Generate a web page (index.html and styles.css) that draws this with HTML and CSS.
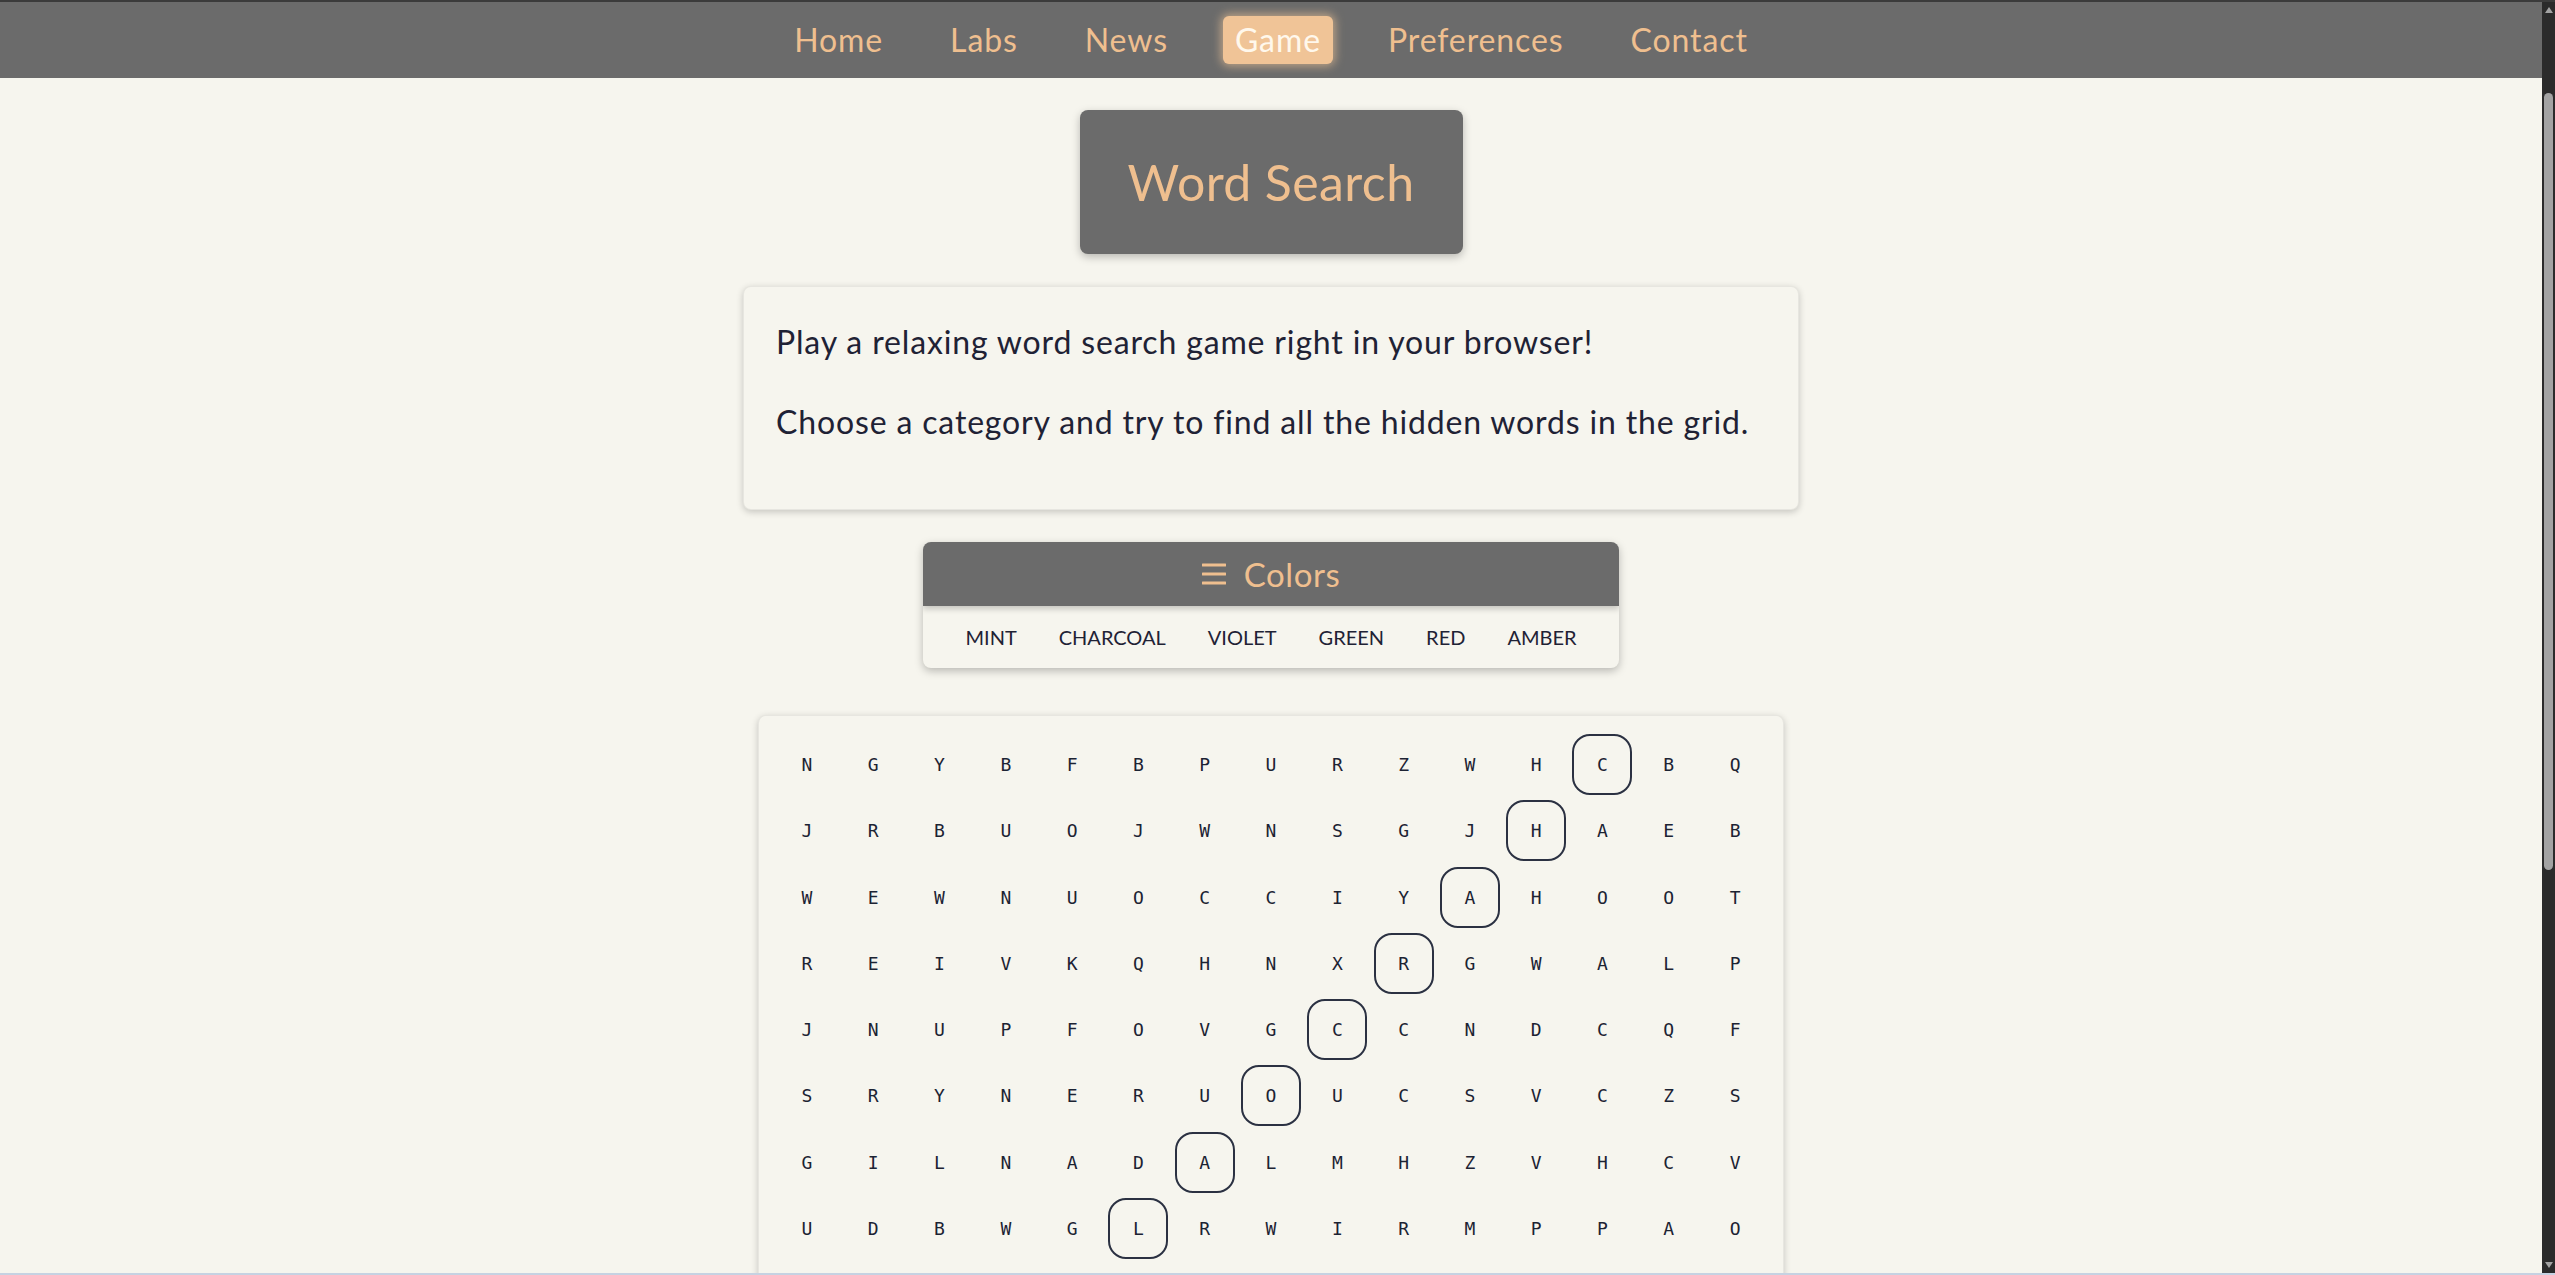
FILE: index.html
```html
<!DOCTYPE html>
<html lang="en">
<head>
<meta charset="utf-8">
<title>Word Search</title>
<link rel="stylesheet" href="styles.css">
</head>
<body>
<div class="frame">
  <div class="viewport">
    <header class="topbar">
      <nav class="nav">
        <a href="#">Home</a>
        <a href="#">Labs</a>
        <a href="#">News</a>
        <a href="#" class="active">Game</a>
        <a href="#">Preferences</a>
        <a href="#">Contact</a>
      </nav>
    </header>
    <main class="content">
      <h1 class="title">Word Search</h1>
      <section class="card intro">
        <p>Play a relaxing word search game right in your browser!</p>
        <p>Choose a category and try to find all the hidden words in the grid.</p>
      </section>
      <section class="category">
        <div class="category-head">
          <svg class="menu-icon" width="24" height="24" viewBox="0 0 24 24" aria-hidden="true">
            <rect x="0" y="1.5" width="24" height="3" rx="0.5"/>
            <rect x="0" y="10.5" width="24" height="3" rx="0.5"/>
            <rect x="0" y="19.5" width="24" height="3" rx="0.5"/>
          </svg>
          <span>Colors</span>
        </div>
        <ul class="word-list">
          <li>MINT</li>
          <li>CHARCOAL</li>
          <li>VIOLET</li>
          <li>GREEN</li>
          <li>RED</li>
          <li>AMBER</li>
        </ul>
      </section>
      <section class="card board">
        <div class="grid">
          <span>N</span><span>G</span><span>Y</span><span>B</span><span>F</span><span>B</span><span>P</span><span>U</span><span>R</span><span>Z</span><span>W</span><span>H</span><span class="found">C</span><span>B</span><span>Q</span>
          <span>J</span><span>R</span><span>B</span><span>U</span><span>O</span><span>J</span><span>W</span><span>N</span><span>S</span><span>G</span><span>J</span><span class="found">H</span><span>A</span><span>E</span><span>B</span>
          <span>W</span><span>E</span><span>W</span><span>N</span><span>U</span><span>O</span><span>C</span><span>C</span><span>I</span><span>Y</span><span class="found">A</span><span>H</span><span>O</span><span>O</span><span>T</span>
          <span>R</span><span>E</span><span>I</span><span>V</span><span>K</span><span>Q</span><span>H</span><span>N</span><span>X</span><span class="found">R</span><span>G</span><span>W</span><span>A</span><span>L</span><span>P</span>
          <span>J</span><span>N</span><span>U</span><span>P</span><span>F</span><span>O</span><span>V</span><span>G</span><span class="found">C</span><span>C</span><span>N</span><span>D</span><span>C</span><span>Q</span><span>F</span>
          <span>S</span><span>R</span><span>Y</span><span>N</span><span>E</span><span>R</span><span>U</span><span class="found">O</span><span>U</span><span>C</span><span>S</span><span>V</span><span>C</span><span>Z</span><span>S</span>
          <span>G</span><span>I</span><span>L</span><span>N</span><span>A</span><span>D</span><span class="found">A</span><span>L</span><span>M</span><span>H</span><span>Z</span><span>V</span><span>H</span><span>C</span><span>V</span>
          <span>U</span><span>D</span><span>B</span><span>W</span><span>G</span><span class="found">L</span><span>R</span><span>W</span><span>I</span><span>R</span><span>M</span><span>P</span><span>P</span><span>A</span><span>O</span>
          <span>K</span><span>T</span><span>E</span><span>S</span><span>M</span><span>A</span><span>O</span><span>B</span><span>N</span><span>D</span><span>F</span><span>H</span><span>J</span><span>V</span><span>L</span>
          <span>Y</span><span>P</span><span>Q</span><span>X</span><span>R</span><span>I</span><span>C</span><span>U</span><span>E</span><span>G</span><span>O</span><span>S</span><span>N</span><span>M</span><span>T</span>
          <span>H</span><span>A</span><span>W</span><span>F</span><span>L</span><span>D</span><span>Z</span><span>K</span><span>P</span><span>R</span><span>V</span><span>E</span><span>I</span><span>B</span><span>U</span>
          <span>E</span><span>O</span><span>N</span><span>T</span><span>J</span><span>S</span><span>G</span><span>Y</span><span>A</span><span>Q</span><span>C</span><span>W</span><span>L</span><span>D</span><span>R</span>
          <span>B</span><span>M</span><span>R</span><span>Z</span><span>I</span><span>V</span><span>E</span><span>N</span><span>F</span><span>O</span><span>T</span><span>K</span><span>U</span><span>S</span><span>X</span>
          <span>D</span><span>C</span><span>F</span><span>G</span><span>A</span><span>H</span><span>L</span><span>Q</span><span>W</span><span>Y</span><span>B</span><span>N</span><span>R</span><span>E</span><span>P</span>
          <span>T</span><span>S</span><span>K</span><span>O</span><span>U</span><span>P</span><span>X</span><span>I</span><span>D</span><span>M</span><span>J</span><span>A</span><span>G</span><span>V</span><span>H</span>
        </div>
      </section>
    </main>
  </div>
  <div class="scrollbar" aria-hidden="true">
    <span class="arrow arrow-up"></span>
    <span class="thumb"></span>
    <span class="track-rest"></span>
    <span class="arrow arrow-down"></span>
  </div>
</div>
</body>
</html>
```

FILE: styles.css
```css
* { box-sizing: border-box; }

html, body {
  margin: 0;
  height: 100%;
  overflow: hidden;
}

body {
  background: #f6f5ee;
  font-family: "Lato", "Noto Sans", sans-serif;
  color: #1f2235;
}

.frame {
  height: 100vh;
  display: grid;
  grid-template-columns: 1fr 13px;
  border-top: 2px solid #3b3b3b;
  border-bottom: 2px solid #c6d2e2;
}

.viewport {
  overflow: hidden;
  min-width: 0;
}

/* top navigation */
.topbar {
  height: 76px;
  background: #6b6b6b;
  display: flex;
  align-items: center;
  justify-content: center;
}

.nav {
  display: flex;
  gap: 43px;
}

.nav a {
  font-size: 32px;
  line-height: 40px;
  letter-spacing: 0.9px;
  padding: 4px 12px;
  border-radius: 6px;
  color: #efbf8f;
  text-decoration: none;
}

.nav a.active {
  background: #f0c497;
  color: #fff8ec;
  box-shadow: 0 0 10px 2px rgba(240, 196, 151, 0.65);
}

/* content column */
.content {
  display: flex;
  flex-direction: column;
  align-items: center;
}

.title {
  margin: 32px 0 0;
  width: 383px;
  height: 144px;
  display: flex;
  align-items: center;
  justify-content: center;
  background: #6b6b6b;
  color: #efbf8f;
  font-size: 50px;
  font-weight: 400;
  letter-spacing: 0.4px;
  border-radius: 8px;
  box-shadow: 0 3px 8px rgba(0, 0, 0, 0.25);
}

.card {
  background: #f6f5ee;
  border-radius: 8px;
  border: 1px solid rgba(0, 0, 0, 0.06);
  box-shadow: 0 2px 7px rgba(0, 0, 0, 0.2);
}

.intro {
  margin-top: 32px;
  width: 1056px;
  padding: 31px 32px;
}

.intro p {
  margin: 0 0 32px;
  font-size: 32px;
  line-height: 48px;
  letter-spacing: 0.85px;
  color: #1f2235;
}

/* category selector */
.category {
  margin-top: 32px;
  border-radius: 8px;
  overflow: hidden;
  background: #f6f5ee;
  box-shadow: 0 3px 8px rgba(0, 0, 0, 0.25);
}

.category-head {
  position: relative;
  height: 64px;
  background: #6b6b6b;
  color: #efbf8f;
  display: flex;
  align-items: center;
  justify-content: center;
  gap: 18px;
  font-size: 33px;
  letter-spacing: 0.6px;
  box-shadow: 0 3px 6px rgba(0, 0, 0, 0.2);
}

.menu-icon {
  fill: #efbf8f;
}

.word-list {
  list-style: none;
  margin: 0;
  padding: 0 42px;
  height: 62px;
  display: flex;
  align-items: center;
  gap: 42px;
  font-size: 20px;
  color: #1f2235;
}

/* board */
.board {
  margin-top: 47px;
  padding: 18px;
  margin-bottom: 40px;
}

.grid {
  display: grid;
  grid-template-columns: repeat(15, 60px);
  gap: 5.3px 6.3px;
}

.grid span {
  height: 61px;
  display: flex;
  align-items: center;
  justify-content: center;
  font-family: "DejaVu Sans Mono", monospace;
  font-size: 18px;
  color: #1c2333;
  border: 2px solid transparent;
  border-radius: 18px;
}

.grid span.found {
  border-color: #2b3142;
}

/* fake browser scrollbar */
.scrollbar {
  background: #2b2b2b;
  display: flex;
  flex-direction: column;
  align-items: center;
  padding: 5px 0 5px;
}

.arrow {
  width: 0;
  height: 0;
  border-left: 4.5px solid transparent;
  border-right: 4.5px solid transparent;
}

.arrow-up {
  border-bottom: 6px solid #a3a3a3;
}

.arrow-down {
  border-top: 6px solid #a3a3a3;
}

.thumb {
  margin-top: 80px;
  width: 9px;
  height: 777px;
  border-radius: 5px;
  background: #a3a3a3;
}

.track-rest {
  flex: 1;
}
```
